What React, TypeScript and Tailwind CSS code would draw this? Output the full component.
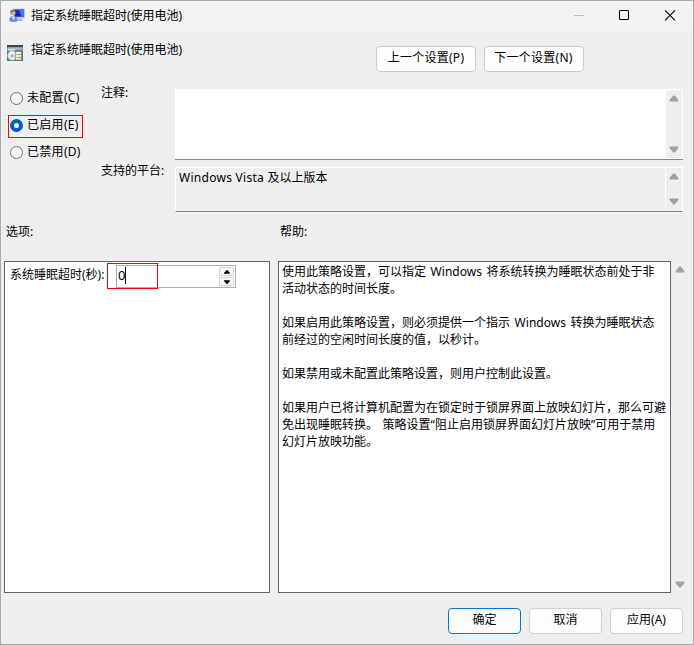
import { useState } from 'react';
import clsx from 'clsx';

const radios = [
  { id: 'none', label: '未配置(C)' },
  { id: 'enabled', label: '已启用(E)' },
  { id: 'disabled', label: '已禁用(D)' },
];

const help = [
  ['使用此策略设置，可以指定 Windows 将系统转换为睡眠状态前处于非', '活动状态的时间长度。'],
  ['如果启用此策略设置，则必须提供一个指示 Windows 转换为睡眠状态', '前经过的空闲时间长度的值，以秒计。'],
  ['如果禁用或未配置此策略设置，则用户控制此设置。'],
  [
    '如果用户已将计算机配置为在锁定时于锁屏界面上放映幻灯片，那么可避',
    '免出现睡眠转换。 策略设置“阻止启用锁屏界面幻灯片放映”可用于禁用',
    '幻灯片放映功能。',
  ],
];

const UserMonitorIcon = () => (
  <svg className="w-4 h-4" viewBox="0 0 16 16">
    <rect x="4" y="0.5" width="12" height="10" rx="0.6" fill="#c5cad2" />
    <rect x="5.5" y="1.5" width="9.5" height="7.3" fill="#1226c4" />
    <path d="M10 1.5h5v7.3h-2.5z" fill="#4a70ee" />
    <path d="M9 10.5h3.5l2 2.5H8z" fill="#b3b8c1" />
    <circle cx="4" cy="4.2" r="2.7" fill="#8f7458" />
    <circle cx="4.4" cy="5.6" r="2" fill="#d6b48b" />
    <path d="M0.3 13v-2.5Q1 8 4 8t4.7 3v2Q4 15 0.3 13z" fill="#6596c6" />
    <path d="M3 8.5l1.5 4 1.5-4z" fill="#e0ecf6" />
  </svg>
);

const PolicyIcon = () => (
  <svg className="w-4 h-4" viewBox="0 0 16 16">
    <rect width="16" height="16" fill="#4a7f84" />
    <rect width="16" height="2" fill="#2f4c58" />
    <rect x="1" y="2" width="14" height="1.5" fill="#88aab0" />
    <rect x="0.5" y="3.5" width="15" height="2" fill="#e2e6e6" />
    <rect x="8" y="4.5" width="7" height="1" fill="#4c6469" />
    <circle cx="5.2" cy="10.7" r="4.7" fill="#e3e6e2" />
    <path d="M5 10.7L2 7.2q3-2 5 0z" fill="#fbfbf7" />
    <circle cx="5.2" cy="10.7" r="1.2" fill="#8fa5a1" />
    <rect x="8.5" y="6.5" width="6" height="8.5" fill="#f5ecd6" stroke="#6c7a76" strokeWidth="0.6" />
    <path d="M9.5 9.5h1M11.5 9.5h2M9.5 12.5h1M11.5 12.5h2" stroke="#7b7262" />
  </svg>
);

const Arrow = ({ down }: { down?: boolean }) => (
  <svg className={clsx('w-[10px] h-[7px]', down && 'rotate-180')} viewBox="0 0 10 7">
    <path d="M4.2 0.5h1.6L9.4 5v1.5H0.6V5z" fill="#a0a0a0" />
  </svg>
);

const ScrollBar = ({ className }: { className?: string }) => (
  <div className={clsx('flex w-4 shrink-0 flex-col items-center justify-between bg-[#efefef]', className)}>
    <Arrow />
    <Arrow down />
  </div>
);

const Button = ({ children, className }: { children: string; className?: string }) => (
  <button
    className={clsx(
      'flex h-[26px] items-start justify-center rounded-[4px] border bg-[#fdfdfd] pt-[2px]',
      className,
    )}
  >
    {children}
  </button>
);

const App = () => {
  const [state, setState] = useState('enabled');

  return (
    <div className="flex h-[645px] w-[694px] flex-col overflow-hidden border border-[#ababab] bg-[#efefef] font-['Noto_Sans','Noto_Sans_CJK_SC',sans-serif] text-[12px] leading-[17px] text-black">
      {/* Title bar */}
      <div className="flex h-[30px] shrink-0 items-start bg-[#f3f3f3] pl-2">
        <div className="pt-[7px]">
          <UserMonitorIcon />
        </div>
        <span className="ml-[6px] flex-1 pt-[6px]">指定系统睡眠超时(使用电池)</span>
        <svg className="h-[30px] w-[138px]" viewBox="0 0 138 30" fill="none">
          <path d="M19 14.5h10" stroke="#c0c0c0" />
          <rect x="64.5" y="9.5" width="9" height="9" rx="1" stroke="#000" strokeWidth="1.1" />
          <path d="M110 9.3l10 10m0-10l-10 10" stroke="#000" strokeWidth="1.1" />
        </svg>
      </div>

      {/* Setting name and navigation */}
      <div className="flex h-[50px] shrink-0 pl-[6px]">
        <div className="mt-[14px]">
          <PolicyIcon />
        </div>
        <span className="ml-2 mt-[10px] w-[345px]">指定系统睡眠超时(使用电池)</span>
        <div className="mt-[15px] flex gap-2">
          <Button className="w-[100px] border-[#cacaca] tracking-[0.25px]">上一个设置(P)</Button>
          <Button className="w-[100px] border-[#cacaca] pr-px tracking-[0.25px]">下一个设置(N)</Button>
        </div>
      </div>

      {/* State, comment and platforms */}
      <div className="flex h-[142px] shrink-0 pl-[7px]">
        <div className="w-[93px] pt-[6px]">
          {radios.map((r) => (
            <label
              key={r.id}
              className={clsx(
                'flex h-[23px] w-[75px] items-center border pl-px',
                r.id === 'enabled' ? 'mt-[5px] mb-[3px] border-[#ff0000] pb-[2px]' : 'border-transparent',
              )}
              onClick={() => setState(r.id)}
            >
              <span
                className={clsx(
                  'h-[13px] w-[13px] shrink-0 rounded-full',
                  state === r.id ? 'border-4 border-[#005fb8] bg-white' : 'border border-[#737373] bg-[#f5f5f5]',
                )}
              />
              <span className="ml-1 -mt-[2px] whitespace-nowrap tracking-[0.3px]">{r.label}</span>
            </label>
          ))}
        </div>
        <div className="w-[74px] pt-[3px]">
          <div className="h-[78px]">注释:</div>
          <div>支持的平台:</div>
        </div>
        <div className="w-[508px] pt-2">
          <div className="flex h-[71px] border-b border-[#868686] bg-white pr-px pt-px pb-px">
            <div className="flex-1" />
            <ScrollBar className="pt-[5px] pb-[5px]" />
          </div>
          <div className="mt-[7px] flex h-[45px] border border-white border-b-[#868686] pb-px">
            <div className="flex-1 border-r border-white pl-[3px] pt-px">
              <span className="tracking-[0.28px]">Windows Vista </span>及以上版本
            </div>
            <ScrollBar className="pt-[5px] pb-[5px]" />
          </div>
        </div>
      </div>

      {/* Panel captions */}
      <div className="flex h-[38px] shrink-0 pl-[5px]">
        <div className="w-[274px]">选项:</div>
        <div>帮助:</div>
      </div>

      {/* Options and help */}
      <div className="flex h-[332px] shrink-0 pl-[3px]">
        <div className="w-[266px] border border-[#646464] bg-white">
          <div className="flex pl-[5px] pt-[3px]">
            <span className="w-[106px] pt-px">系统睡眠超时(秒):</span>
            <div className="relative flex h-[23px] w-[120px] border border-[#abadb3]">
              <div className="flex flex-1 items-start pl-px pt-px text-[13px]">
                <span>0</span>
                <span className="h-[17px] w-px bg-black" />
              </div>
              <div className="mr-px mt-px flex w-[15px] flex-col gap-px">
                {[false, true].map((down) => (
                  <div
                    key={String(down)}
                    className="flex h-[9px] items-center justify-center rounded-[1px] border border-[#d2d2d2] bg-[#f5f5f5]"
                  >
                    <svg className={clsx('h-1 w-[6px]', down && 'rotate-180')} viewBox="0 0 6 4">
                      <path d="M2.6 0h0.8L6 3v0.8H0V3z" fill="#000" />
                    </svg>
                  </div>
                ))}
              </div>
              <div className="absolute -left-[10px] -top-[3px] h-[26px] w-[51px] border border-[#ff0000]" />
            </div>
          </div>
        </div>
        <div className="ml-2 w-[393px] border border-[#646464] bg-white pl-[3px] pt-px [word-spacing:1.5px]">
          {help.map((lines) => (
            <p key={lines[0]} className="mb-[17px]">
              {lines.map((line) => (
                <span key={line} className="block whitespace-nowrap">
                  {line}
                </span>
              ))}
            </p>
          ))}
        </div>
        <ScrollBar className="ml-px pt-[5px] pb-[5px]" />
      </div>

      {/* Footer */}
      <div className="flex gap-2 pl-[447px] pt-[15px]">
        <Button className="w-[73px] border-[#0078d4]">确定</Button>
        <Button className="w-[73px] border-[#d0d0d0]">取消</Button>
        <Button className="w-[73px] border-[#d0d0d0]">应用(A)</Button>
      </div>
    </div>
  );
};

export default App;
